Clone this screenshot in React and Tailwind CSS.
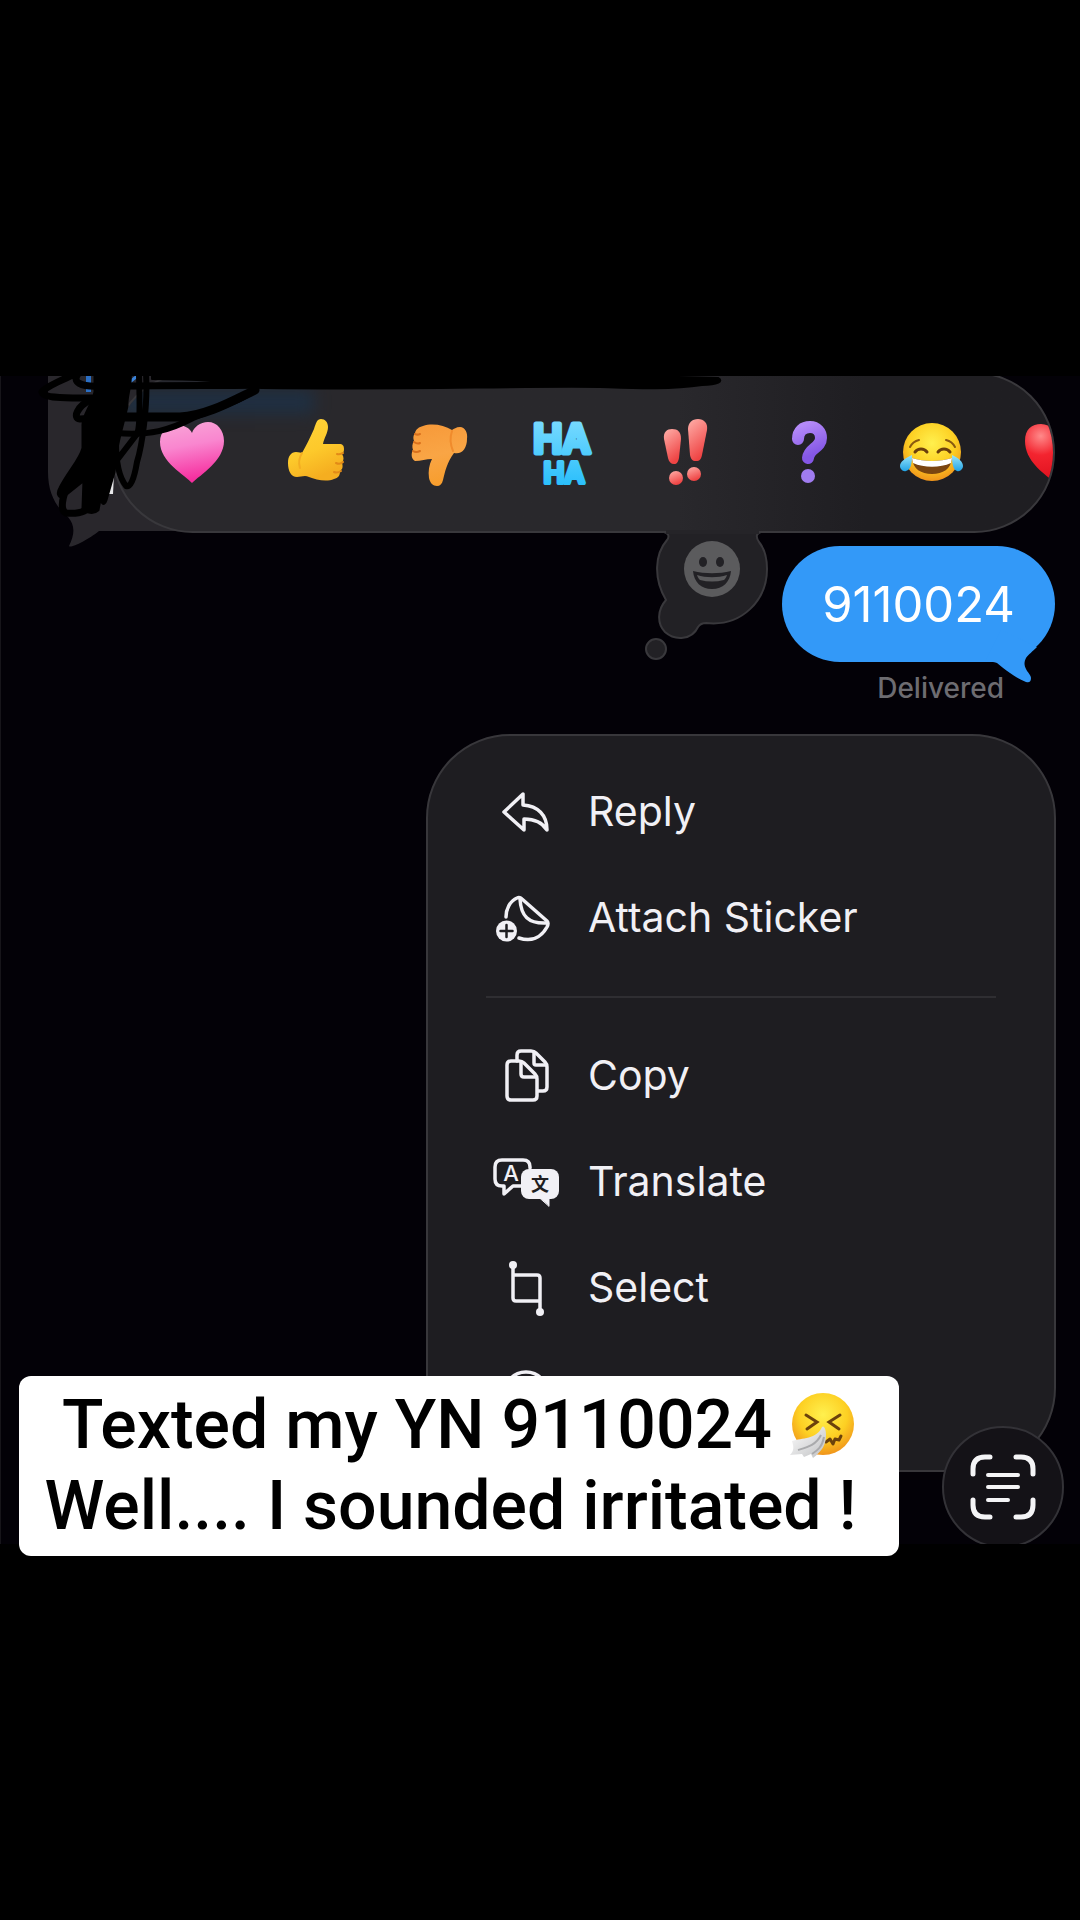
import React from 'react';

const Defs = () => (
  <svg className="absolute h-0 w-0" aria-hidden="true">
    <defs>
      <linearGradient id="pink" x1="0" y1="0" x2="0.2" y2="1">
        <stop offset="0" stopColor="#f9a8d8" />
        <stop offset="0.45" stopColor="#f986cf" />
        <stop offset="1" stopColor="#f62f9f" />
      </linearGradient>
      <linearGradient id="thumb" x1="0" y1="0" x2="0.4" y2="1">
        <stop offset="0" stopColor="#ffd43a" />
        <stop offset="0.6" stopColor="#fdc92b" />
        <stop offset="1" stopColor="#f5ae20" />
      </linearGradient>
      <linearGradient id="thumbDown" x1="0.3" y1="0" x2="0.5" y2="1">
        <stop offset="0" stopColor="#f79a3a" />
        <stop offset="0.5" stopColor="#f9a545" />
        <stop offset="1" stopColor="#f79d2c" />
      </linearGradient>
      <linearGradient id="haha" x1="0" y1="0" x2="0" y2="1">
        <stop offset="0" stopColor="#7edcff" />
        <stop offset="1" stopColor="#25bdfb" />
      </linearGradient>
      <linearGradient id="bang" x1="0" y1="0" x2="0.4" y2="1">
        <stop offset="0" stopColor="#ffb0aa" />
        <stop offset="1" stopColor="#ef4444" />
      </linearGradient>
      <linearGradient id="purple" x1="0" y1="0" x2="0.3" y2="1">
        <stop offset="0" stopColor="#b48af8" />
        <stop offset="1" stopColor="#8457e6" />
      </linearGradient>
      <radialGradient id="face" cx="0.5" cy="0.35" r="0.65">
        <stop offset="0" stopColor="#fff04e" />
        <stop offset="0.6" stopColor="#fdd023" />
        <stop offset="1" stopColor="#f0941b" />
      </radialGradient>
      <linearGradient id="tear" x1="0" y1="0" x2="0" y2="1">
        <stop offset="0" stopColor="#9be6fb" />
        <stop offset="1" stopColor="#21a3e6" />
      </linearGradient>
      <radialGradient id="red" cx="0.25" cy="0.2" r="0.8">
        <stop offset="0" stopColor="#ff8a8a" />
        <stop offset="0.4" stopColor="#f3242f" />
        <stop offset="1" stopColor="#dd0f1c" />
      </radialGradient>
      <linearGradient id="tissue" x1="0" y1="0" x2="1" y2="1">
        <stop offset="0" stopColor="#ffffff" />
        <stop offset="1" stopColor="#bfc0c2" />
      </linearGradient>
    </defs>
  </svg>
);

const HEART = 'M32 66 C25 58 0 45 0 25 C0 14 8 8 17 8 C24 8 30 11 32 16 C34 10 40 5 48 5 C57 5 64 13 64 24 C64 44 40 58 32 66Z';

const reactions = [
  {
    label: 'Love',
    art: <path d={HEART} fill="url(#pink)" />,
  },
  {
    label: 'Like',
    art: (
      <>
        <path d="M5 46 C5 39 8 35 13 35 C16 35 18 36 19 36 C23 29 27 21 31 12 C33 6 34 2 38 2 C42 2 45 5 45 10 C45 16 41 21 40 27 L56 27 C60 27 61 29 61 32 C61 35 60 36 59 37 C61 40 61 43 59 46 C60 49 60 52 57 54 C57 59 55 61 51 62 C44 65 33 63 26 60 C22 58 18 60 14 60 C8 60 5 54 5 46Z" fill="url(#thumb)" />
        <path d="M54 37 C56 38 58 37 60 36 M53 46 C55 47 58 47 60 45 M51 55 C53 56 55 56 58 54" fill="none" stroke="#e28a17" strokeWidth="2" strokeLinecap="round" />
        <path d="M19 36 C16 41 15 45 17 51" fill="none" stroke="#f3ad22" strokeWidth="2" strokeLinecap="round" />
      </>
    ),
  },
  {
    label: 'Dislike',
    art: (
      <>
        <path d="M61 22 C62 16 59 10 54 10 C50 10 48 12 46 13 C38 8 26 6 17 9 C13 10 10 12 9 16 C7 19 7 21 8 24 C6 27 6 30 7 33 C5 36 5 42 9 44 C15 44 20 42 26 42 C23 48 22 54 23 61 C24 66 27 69 31 69 C34 69 36 67 37 63 C39 55 41 45 48 36 C56 38 61 31 61 22Z" fill="url(#thumbDown)" />
        <path d="M9 17 C11 18 12 18 14 17 M8 25 C11 27 12 27 14 26 M7 34 C10 36 12 35 14 34" fill="none" stroke="#d9701c" strokeWidth="2" strokeLinecap="round" />
        <path d="M46 14 C44 20 44 27 47 34" fill="none" stroke="#f08b2c" strokeWidth="2" strokeLinecap="round" />
      </>
    ),
  },
  {
    label: 'Laugh',
    art: (
      <text
        textAnchor="middle"
        fontFamily="Inter, sans-serif"
        fontWeight="600"
        fill="url(#haha)"
        stroke="url(#haha)"
        strokeWidth="5"
        strokeLinejoin="round"
        strokeLinecap="round"
      >
        <tspan x="33" y="36" fontSize="39">HA</tspan>
        <tspan x="35" y="66" fontSize="28" strokeWidth="4">HA</tspan>
      </text>
    ),
  },
  {
    label: 'Emphasize',
    art: (
      <g fill="url(#bang)">
        <path d="M12 22 C11 15 15 12 20 12 C26 12 29 15 29 22 L27 41 C26 45 25 47 22 47 C19 47 17 45 16 41Z" />
        <circle cx="24" cy="61" r="7" />
        <path d="M36 12 C36 6 40 2 46 2 C52 2 56 6 55 13 L50 38 C49 42 48 44 44 44 C40 44 39 42 38 38Z" />
        <circle cx="42" cy="57" r="7" />
      </g>
    ),
  },
  {
    label: 'Question',
    art: (
      <>
        <path d="M23 22 C23 14 28 10 35 10 C42 10 46 15 46 21 C46 31 34 31 33 41" fill="none" stroke="url(#purple)" strokeWidth="12" strokeLinecap="round" />
        <circle cx="33" cy="59" r="7" fill="#a07cf0" />
      </>
    ),
  },
  {
    label: 'Tears of joy',
    art: (
      <>
        <circle cx="34" cy="35" r="29" fill="url(#face)" />
        <path d="M12 30 C14 26 17 24 21 23 M57 30 C55 26 52 24 48 23" fill="none" stroke="#8a5a10" strokeWidth="2" strokeLinecap="round" />
        <path d="M17 35 C20 31 26 31 29 35 M40 35 C43 31 49 31 52 35" fill="none" stroke="#6b3f0c" strokeWidth="3" strokeLinecap="round" />
        <path d="M14 41 C26 45 42 45 54 41 C53 52 45 57 34 57 C23 57 15 52 14 41Z" fill="#7a4510" />
        <path d="M14 41 C26 45 42 45 54 41 L53 46 C42 51 26 51 15 46Z" fill="#fff" />
        <path d="M14 38 C7 41 2 45 2 49 C2 52 5 55 8 54 C13 53 14 46 14 38Z M54 38 C61 41 65 45 65 49 C65 52 62 55 59 54 C55 53 54 46 54 38Z" fill="url(#tear)" />
      </>
    ),
  },
  {
    label: 'Red heart',
    art: <path d="M35 67 C26 58 4 46 4 24 C4 12 11 7 20 7 C27 7 32 11 35 17 C38 11 43 7 50 7 C59 7 67 13 67 24 C67 46 43 58 35 67Z" fill="url(#red)" />,
  },
];

const Icon = ({ children }) => (
  <svg width="68" height="60" viewBox="0 0 68 60" fill="none" stroke="currentColor" strokeWidth="3.5" strokeLinecap="round" strokeLinejoin="round" aria-hidden="true">
    {children}
  </svg>
);

const ReplyIcon = () => (
  <Icon>
    <path d="M12 30 L31 12 V23 C46 24 55 33 55 48 C50 40 43 37 32 37 V48 Z" />
  </Icon>
);

const StickerIcon = () => (
  <Icon>
    <path d="M14 29 C14 21 18 13 25 10 C27 9 29 10 30 11 L55 33 C57 35 56 37 55 39 C49 50 39 54 27 50" />
    <path d="M28 11 C29 28 36 36 55 35" />
    <circle cx="14.5" cy="43" r="10.5" fill="currentColor" stroke="none" />
    <path d="M14.5 37 V49 M8.5 43 H20.5" stroke="#1e1d21" strokeWidth="2.5" />
  </Icon>
);

const CopyIcon = () => (
  <Icon>
    <path d="M25 15 V9 Q25 5 29 5 H39 Q42 5 44 7 L53 16 Q55 18 55 21 V41 Q55 45 51 45 H46" />
    <path d="M42 6 V17 Q42 19 44 19 H54" />
    <path d="M19 15 H27 Q30 15 32 17 L43 28 Q45 30 45 33 V50 Q45 54 41 54 H19 Q15 54 15 50 V19 Q15 15 19 15 Z" />
    <path d="M29 16 V28 Q29 31 32 31 H44" />
  </Icon>
);

const TranslateIcon = () => (
  <Icon>
    <path d="M38 16 V15 Q38 8 31 8 H10 Q3 8 3 15 V27 Q3 34 10 34 H12 V42 L21 34 H29" />
    <text x="19" y="29" fontFamily="Inter, sans-serif" fontSize="22" fontWeight="500" textAnchor="middle" fill="currentColor" stroke="none">A</text>
    <rect x="29" y="17" width="38" height="30" rx="8" fill="currentColor" stroke="none" />
    <path d="M48 46 H57 V54 Z" fill="currentColor" strokeWidth="1" />
    <text x="48" y="39" fontFamily="'Noto Sans CJK SC', sans-serif" fontSize="18" fontWeight="700" textAnchor="middle" fill="#1e1d21" stroke="none">文</text>
  </Icon>
);

const SelectIcon = () => (
  <Icon>
    <path d="M21 7 V40 Q21 43 24 43 H48 M21 17 H45 Q48 17 48 20 V54" />
    <circle cx="21" cy="7" r="4" fill="currentColor" stroke="none" />
    <circle cx="48" cy="54" r="4" fill="currentColor" stroke="none" />
  </Icon>
);

const MoreIcon = () => (
  <Icon>
    <circle cx="34" cy="30" r="22" />
    <path d="M24 30 H24 M34 30 H34 M44 30 H44" strokeWidth="5" />
  </Icon>
);

const menuGroups = [
  [
    { label: 'Reply', icon: ReplyIcon },
    { label: 'Attach Sticker', icon: StickerIcon },
  ],
  [
    { label: 'Copy', icon: CopyIcon },
    { label: 'Translate', icon: TranslateIcon },
    { label: 'Select', icon: SelectIcon },
    { label: 'More', icon: MoreIcon, iconOnly: true },
  ],
];

// Incoming message bubble that sits under the reaction bar
const IncomingBubble = () => (
  <svg className="absolute left-0 top-0" width="820" height="180" viewBox="0 0 820 180" aria-hidden="true">
    <path d="M48 0 V96 C48 116 55 130 68 141 C75 149 75 158 69 170 C70 173 88 164 99 155 H740 C790 155 815 120 815 80 V0 Z" fill="#29272c" />
    <rect x="86" y="0" width="5" height="16" fill="#2b6fc4" />
    <path d="M114 98 L113 118 H108 L110 104 Z" fill="#e8e8ea" />
  </svg>
);

// Marker scribble that hides the sender's text
const Scribble = () => (
  <svg className="pointer-events-none absolute left-0 top-0" width="760" height="180" viewBox="0 0 760 180" fill="none" stroke="#000" strokeWidth="7" strokeLinecap="round" strokeLinejoin="round" aria-hidden="true">
    <path d="M122 18 Q126 8 136 1" stroke="#3a82d8" strokeWidth="3" />
    <path d="M95 -4 H130 C132 8 126 20 127 30 C124 44 120 56 117 72 L114 96 L106 124 C104 130 101 128 101 118 L98 134 C94 138 86 137 83 132 L84 104 L64 120 C58 122 57 117 60 112 C68 96 80 84 83 72 L83 50 C82 40 92 30 95 16 Z" fill="#000" strokeWidth="3" />
    <path d="M78 -4 C64 4 46 10 42 16 C44 23 70 22 92 22 M78 -2 C72 6 80 11 100 10" />
    <path d="M90 24 C78 30 72 42 80 43 L96 42 M68 108 C62 122 60 134 66 137 C74 138 84 137 88 132" />
    <path d="M146 -2 C148 30 142 70 137 86 C134 104 130 112 126 110 C118 100 116 84 116 66 M139 0 C140 30 140 52 137 58 L114 88" strokeWidth="6" />
    <path d="M118 41 H180 C206 40 234 24 255 14" strokeWidth="9" />
    <path d="M116 57 C150 60 170 54 193 42 C220 30 240 26 254 14" strokeWidth="6" />
    <path d="M130 10 C180 9 230 10 270 9" strokeWidth="7" />
    <path d="M152 -4 H560 C600 -2 660 1 718 2 C724 5 718 9 702 9 C670 14 630 12 600 11 C500 10 420 14 262 12 C235 6 200 3 152 3Z" fill="#000" strokeWidth="2" />
  </svg>
);

const EmojiPopover = () => (
  <svg className="absolute left-[640px] top-[152px]" width="140" height="140" viewBox="0 0 140 140" aria-hidden="true">
    <path d="M24 4 C28 5 30 8 27 12 C15 26 13 50 26 72 C17 82 17 96 25 104 C35 113 52 112 58 99 C60 96 63 95 66 95 C102 99 127 72 127 41 C127 29 124 20 119 14 C115 8 117 5 121 4" fill="#222125" stroke="#39383c" strokeWidth="2" />
    <path d="M26 2 H119 V6 H26Z" fill="#252428" />
    <circle cx="16" cy="121" r="10" fill="#222125" stroke="#39383c" strokeWidth="2" />
    <circle cx="72" cy="41" r="28" fill="#5b5b5d" />
    <ellipse cx="63" cy="34" rx="4" ry="5" fill="#222125" />
    <ellipse cx="80" cy="34" rx="4" ry="5" fill="#222125" />
    <path d="M53 43 C65 46 79 46 91 43 C90 54 83 61 72 61 C61 61 54 54 53 43Z" fill="#222125" />
    <path d="M57 47 C66 50 78 50 87 47 C86 50 85 51 84 52 C76 54 68 54 60 52 C59 51 58 50 57 47Z" fill="#5b5b5d" />
  </svg>
);

const SneezeEmoji = () => (
  <svg className="ml-4" width="68" height="72" viewBox="0 0 68 72" role="img" aria-label="Sneezing face">
    <circle cx="35" cy="34" r="31" fill="url(#face)" />
    <path d="M18 25 L29 32 L19 39 M52 25 L41 32 L51 39" fill="none" stroke="#6b420c" strokeWidth="3" strokeLinecap="round" />
    <path d="M38 52 L42 49 L45 54 L47 49 L51 50 L53 46" fill="none" stroke="#6b420c" strokeWidth="3" strokeLinecap="round" strokeLinejoin="round" />
    <path d="M34 37 C36 35 38 39 38 45 C38 55 34 61 25 68 L23 64 L16 67 L14 64 L2 65 C6 61 6 57 4 51 C14 48 29 49 34 37Z" fill="url(#tissue)" />
    <path d="M33 45 C28 55 20 57 10 60 M36 47 C34 57 30 60 24 64" fill="none" stroke="#a9aaac" strokeWidth="2" />
  </svg>
);

function ReactionBar() {
  return (
    <div className="relative -mt-1 ml-28 mr-[25px] flex h-[161px] items-center gap-[59px] overflow-hidden rounded-full border-2 border-[#39383c] bg-linear-to-r from-[#29282c] from-60% to-[#1f1e22] to-80% pl-[46px]">
      <div className="absolute left-2 top-4 h-6 w-48 bg-[#1c3148] opacity-80 blur-sm" />
      {reactions.map(({ label, art }) => (
        <button key={label} aria-label={label} className="relative shrink-0 cursor-pointer">
          <svg width="64" height="72" viewBox="0 0 64 72" className="overflow-visible" aria-hidden="true">
            {art}
          </svg>
        </button>
      ))}
    </div>
  );
}

function ContextMenu() {
  return (
    <div className="ml-auto mr-6 mt-[26px] w-7/12 rounded-[84px] border-2 border-[#38373b] bg-[#1e1d21] py-[23px]">
      {menuGroups.map((group, i) => (
        <React.Fragment key={i}>
          {i > 0 && <hr className="mx-[58px] my-[25px] border-t-2 border-[#2f2e32]" />}
          {group.map(({ label, icon: ItemIcon, iconOnly }) => (
            <button
              key={label}
              aria-label={label}
              className="flex h-[106px] w-full cursor-pointer items-center gap-7 px-16 text-left text-[41px] text-[#f1f0f5]"
            >
              <ItemIcon />
              {!iconOnly && <span>{label}</span>}
            </button>
          ))}
        </React.Fragment>
      ))}
    </div>
  );
}

export default function App() {
  return (
    <main className="min-h-screen bg-black pt-[376px] font-['Inter',sans-serif]">
      <Defs />
      <div className="relative">
        <section className="relative flow-root overflow-hidden bg-[#030107] pb-[72px] shadow-[inset_1px_0_0_#17151a]">
          <IncomingBubble />
          <ReactionBar />
          <EmojiPopover />
          <Scribble />

          {/* Sent message */}
          <div className="mr-[25px] mt-[13px] flex flex-col items-end">
            <div className="relative flex h-[116px] items-center rounded-full bg-[#3399f8] px-10 pt-[2px] text-[49px] text-white">
              9110024
              <svg className="absolute -bottom-[22px] right-[14px]" width="60" height="60" viewBox="0 0 60 60" aria-hidden="true">
                <path d="M56 23 C51 28 48 30 45 34 C43 38 43 41 45 45 C47 49 50 51 50 54 C50 58 48 59 45 58 C38 55 33 52 29 49 C24 46 20 42 16 39 C14 38 12 38 4 38 L20 6 Z" fill="#3399f8" />
              </svg>
            </div>
            <p className="mr-[51px] mt-[6px] text-[28px] font-medium leading-10 text-[#6d6c71]">Delivered</p>
          </div>

          <ContextMenu />

          <button
            aria-label="Scan text"
            className="absolute -bottom-1 right-4 flex h-[122px] w-[122px] cursor-pointer items-center justify-center rounded-full border-2 border-[#333237] bg-[#141217] text-[#f4f4f6]"
          >
            <svg width="66" height="66" viewBox="0 0 66 66" fill="none" stroke="currentColor" strokeWidth="5" strokeLinecap="round" aria-hidden="true">
              <path d="M3 20 V15 Q3 3 15 3 H20 M46 3 H51 Q63 3 63 15 V20 M63 46 V51 Q63 63 51 63 H46 M20 63 H15 Q3 63 3 51 V46" />
              <path d="M18 21 H48 M18 33 H48 M18 46 H38" strokeWidth="4" />
            </svg>
          </button>
        </section>

        {/* Caption */}
        <div className="absolute -bottom-[12px] left-[19px] right-[181px] rounded-xl bg-white pb-[9px] pt-[9px] text-center font-['Roboto',sans-serif] text-[68px] font-medium leading-[81px] text-black">
          <p className="flex h-[81px] items-center justify-center whitespace-nowrap">
            Texted my YN 9110024
            <SneezeEmoji />
          </p>
          <p className="whitespace-nowrap">Well.... I sounded irritated !&nbsp;</p>
        </div>
      </div>
    </main>
  );
}
